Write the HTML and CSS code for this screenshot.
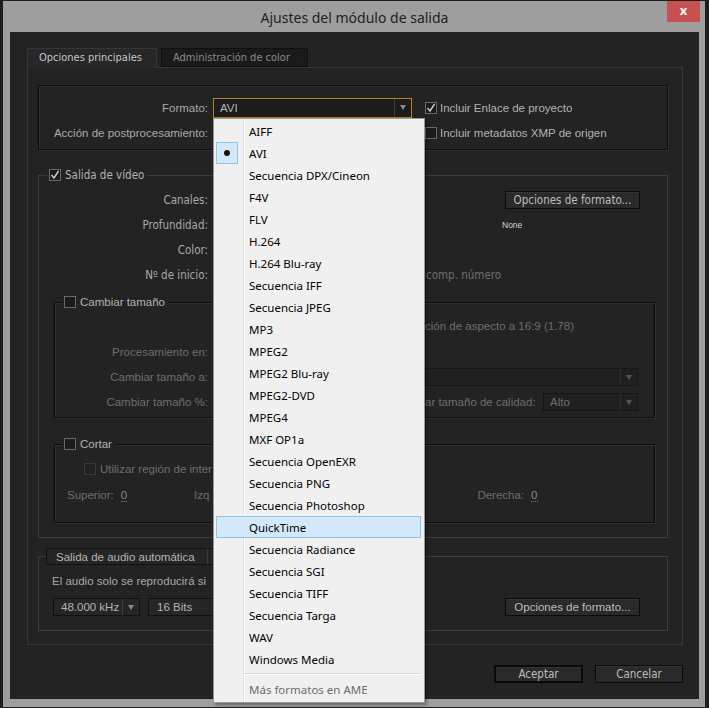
FILE: index.html
```html
<!DOCTYPE html>
<html lang="es">
<head>
    <meta charset="UTF-8">
    <title>Ajustes del módulo de salida</title>
    <link rel="stylesheet" href="styles.css">
</head>
<body>

<div class="window">
    <div class="titlebar">
        <span class="title">Ajustes del módulo de salida</span>
        <span class="close">x</span>
    </div>

    <div class="dialog">
        <div class="tabs">
            <div class="tab active">Opciones principales</div>
            <div class="tab">Administración de color</div>
        </div>

        <div class="panel">
            <!-- formato -->
            <div class="group group-format">
                <div class="row">
                    <span class="label">Formato:</span>
                    <div class="select select-format focus"><span class="value">AVI</span><span class="arrow"></span></div>
                    <span class="check on"><span class="box"><svg viewBox="0 0 10 10"><polyline points="1.5,5 4,8 8.5,1"/></svg></span>Incluir Enlace de proyecto</span>
                </div>
                <div class="row">
                    <span class="label">Acción de postprocesamiento:</span>
                    <div class="select select-format"><span class="value"></span><span class="arrow"></span></div>
                    <span class="check"><span class="box"></span>Incluir metadatos XMP de origen</span>
                </div>
            </div>

            <!-- video -->
            <div class="group group-video">
                <div class="legend"><span class="check on"><span class="box"><svg viewBox="0 0 10 10"><polyline points="1.5,5 4,8 8.5,1"/></svg></span><span class="wide">Salida de vídeo</span></span></div>
                <div class="vrow">
                    <span class="label wide">Canales:</span>
                    <button class="btn btn-format wide">Opciones de formato...</button>
                </div>
                <div class="vrow">
                    <span class="label wide">Profundidad:</span>
                    <span class="none">None</span>
                </div>
                <div class="vrow">
                    <span class="label wide">Color:</span>
                </div>
                <div class="vrow">
                    <span class="label wide">Nº de inicio:</span>
                    <span class="dim wide comp">comp. número</span>
                </div>

                <div class="group group-sub group-resize">
                    <div class="legend"><span class="check"><span class="box"></span>Cambiar tamaño</span></div>
                    <div class="srow">
                        <span class="label"></span>
                        <span class="dim at-right">ción de aspecto a 16:9 (1.78)</span>
                    </div>
                    <div class="srow">
                        <span class="label dim">Procesamiento en:</span>
                    </div>
                    <div class="srow">
                        <span class="label dim">Cambiar tamaño a:</span>
                        <div class="select select-off select-size"><span class="value"></span><span class="arrow"></span></div>
                    </div>
                    <div class="srow">
                        <span class="label dim">Cambiar tamaño %:</span>
                        <span class="dim at-right">ar tamaño de calidad:</span>
                        <div class="select select-off select-quality"><span class="value">Alto</span><span class="arrow"></span></div>
                    </div>
                </div>

                <div class="group group-sub group-crop">
                    <div class="legend"><span class="check"><span class="box"></span>Cortar</span></div>
                    <div class="srow">
                        <span class="check off roi"><span class="box"></span>Utilizar región de inter</span>
                    </div>
                    <div class="srow crop-values">
                        <span class="dim sup">Superior:</span><span class="num">0</span>
                        <span class="dim izq">Izq</span>
                        <span class="dim der">Derecha:</span><span class="num">0</span>
                    </div>
                </div>
            </div>

            <!-- audio -->
            <div class="group group-audio">
                <div class="legend legend-select">
                    <div class="select select-audio"><span class="value">Salida de audio automática</span><span class="arrow"></span></div>
                </div>
                <div class="arow">El audio solo se reproducirá si</div>
                <div class="arow arow-controls">
                    <div class="select select-rate"><span class="value">48.000 kHz</span><span class="arrow"></span></div>
                    <div class="select select-bits"><span class="value">16 Bits</span><span class="arrow"></span></div>
                    <button class="btn btn-format">Opciones de formato...</button>
                </div>
            </div>
        </div>

        <div class="buttons">
            <button class="btn btn-main default">Aceptar</button>
            <button class="btn btn-main">Cancelar</button>
        </div>
    </div>

    <!-- lista desplegable de formatos -->
    <div class="menu">
        <div class="menu-item">AIFF</div>
        <div class="menu-item checked"><span class="bullet"></span>AVI</div>
        <div class="menu-item">Secuencia DPX/Cineon</div>
        <div class="menu-item">F4V</div>
        <div class="menu-item">FLV</div>
        <div class="menu-item">H.264</div>
        <div class="menu-item">H.264 Blu-ray</div>
        <div class="menu-item">Secuencia IFF</div>
        <div class="menu-item">Secuencia JPEG</div>
        <div class="menu-item">MP3</div>
        <div class="menu-item">MPEG2</div>
        <div class="menu-item">MPEG2 Blu-ray</div>
        <div class="menu-item">MPEG2-DVD</div>
        <div class="menu-item">MPEG4</div>
        <div class="menu-item">MXF OP1a</div>
        <div class="menu-item">Secuencia OpenEXR</div>
        <div class="menu-item">Secuencia PNG</div>
        <div class="menu-item">Secuencia Photoshop</div>
        <div class="menu-item hover">QuickTime</div>
        <div class="menu-item">Secuencia Radiance</div>
        <div class="menu-item">Secuencia SGI</div>
        <div class="menu-item">Secuencia TIFF</div>
        <div class="menu-item">Secuencia Targa</div>
        <div class="menu-item">WAV</div>
        <div class="menu-item">Windows Media</div>
        <div class="menu-sep"></div>
        <div class="menu-item disabled">Más formatos en AME</div>
    </div>
</div>

</body>
</html>
```

FILE: styles.css
```css
* { box-sizing: border-box; }
body {
    margin: 0;
    background: #1d1d1d;
    font-family: "Liberation Sans", Arial, sans-serif;
    font-size: 11.5px;
    color: #a9a9a9;
}
button { font: inherit; }

.window {
    position: relative;
    margin: 1px 4px 0 3px;
    height: 706px;
    background: #9e9e9e;
    padding: 0 6px 7px 7px;
}
.titlebar {
    height: 31px;
    display: grid;
    grid-template-columns: 1fr auto 1fr;
}
.title {
    grid-column: 2;
    align-self: center;
    padding-top: 1px;
    font-family: "Noto Sans", sans-serif;
    font-size: 14px;
    color: #1e1e1e;
}
.close {
    grid-column: 3;
    justify-self: end;
    width: 33px;
    height: 21px;
    margin-right: -1px;
    background: #c75050;
    color: #fff;
    font-family: "Noto Sans", sans-serif;
    font-size: 13px;
    font-weight: bold;
    text-align: center;
    line-height: 19px;
}

.dialog {
    height: 667px;
    background: #232323;
    padding: 16px 16px 16px 17px;
}

/* tabs */
.tabs {
    display: flex;
    align-items: flex-start;
    height: 19px;
}
.tab {
    height: 19px;
    padding: 0 11px;
    line-height: 18px;
    white-space: nowrap;
    font-family: "DejaVu Sans Condensed", "DejaVu Sans", sans-serif;
    font-size: 11px;
    color: #8a8a8a;
    background: #1a1a1a;
    border: 1px solid #101010;
    margin-left: 4px;
    width: 147px;
}
.tab.active {
    position: relative;
    z-index: 1;
    height: 20px;
    width: 130px;
    margin-left: 0;
    color: #c4c4c4;
    background: #272727;
    border: 1px solid #363636;
    border-bottom: none;
}

.panel {
    height: 578px;
    border: 1px solid #363636;
    padding: 17px 14px 0 10px;
}

/* grupos */
.group {
    border: 1px solid #0e0e0e;
    box-shadow: inset 1px 1px 0 #303030, 1px 1px 0 #303030;
}
.group-format {
    height: 65px;
    padding: 12px 0 0;
    display: flex;
    flex-direction: column;
    gap: 5px;
}
.row {
    display: flex;
    align-items: center;
    height: 20px;
}
.label {
    flex-shrink: 0;
    width: 169px;
    text-align: right;
    white-space: nowrap;
}
.wide {
    font-family: "DejaVu Sans Condensed", "DejaVu Sans", sans-serif;
    font-size: 11.5px;
}

.select {
    display: flex;
    align-items: center;
    height: 18px;
    background: #1e1e1e;
    border: 1px solid #0d0d0d;
    color: #b4b4b4;
    white-space: nowrap;
}
.select .value {
    flex: 1;
    padding-left: 6px;
    overflow: hidden;
}
.select .arrow {
    width: 17px;
    height: 100%;
    border-left: 1px solid #3c3c3c;
    position: relative;
}
.select .arrow::after {
    content: '';
    position: absolute;
    left: 5px;
    top: 6px;
    border-left: 3.5px solid transparent;
    border-right: 3.5px solid transparent;
    border-top: 5px solid #8a8a8a;
}
.select-format {
    margin-left: 5px;
    width: 199px;
    height: 20px;
    background: #1c1c1c;
}
.select-format.focus { border-color: #b47f2c; }

.check {
    display: flex;
    align-items: center;
    gap: 3px;
    white-space: nowrap;
    color: #b2b2b2;
}
.row .check { margin-left: 13px; }
.box {
    width: 12px;
    height: 12px;
    flex-shrink: 0;
    border: 1px solid #6a6a6a;
    background: #1b1b1b;
    display: flex;
}
.box svg {
    width: 10px;
    height: 10px;
    fill: none;
    stroke: #cfcfcf;
    stroke-width: 1.4;
}

/* leyenda de grupo */
.legend {
    width: fit-content;
    height: 14px;
    margin: -8px 0 0 8px;
    padding: 0 3px 0 2px;
    background: #232323;
    display: flex;
    align-items: center;
}
.legend .check { gap: 4px; }

.group-video {
    margin-top: 25px;
    height: 363px;
    border-color: #3d3d3d;
    box-shadow: none;
}
.vrow {
    display: flex;
    align-items: center;
    height: 18px;
    margin-top: 7px;
}
.group-video .legend + .vrow { margin-top: 9px; }
.btn {
    height: 18px;
    padding: 0;
    background: #2a2a2a;
    border: 1px solid #0b0b0b;
    box-shadow: inset 0 1px 0 #353535;
    color: #bdbdbd;
    cursor: default;
}
.btn-format {
    width: 135px;
    margin-left: auto;
    margin-right: 27px;
}
.none {
    margin-left: 294px;
    font-size: 8.5px;
    color: #d4d4d4;
}
.dim { color: #6e6e6e; white-space: nowrap; }
.comp { margin-left: 218px; }

.group-sub {
    margin: 18px 12px 0 15px;
}
.group-sub .legend { margin-left: 7px; }
.group-resize { height: 116px; }
.srow {
    display: flex;
    align-items: center;
    height: 18px;
    margin-top: 7px;
}
.group-sub .label { width: 153px; }
.group-resize .legend + .srow { margin-top: 8px; }
.group-resize .srow:nth-child(3) { margin-top: 8px; }
.at-right { margin-left: 217px; }
.select-off {
    background: #202020;
    border-color: #161616;
    color: #6e6e6e;
}
.select-off .arrow { border-left-color: #2e2e2e; }
.select-off .arrow::after { border-top-color: #555; }
.select-size { width: 213px; margin-left: auto; margin-right: 16px; }
.select-quality { width: 95px; margin-left: auto; margin-right: 16px; }

.group-crop {
    margin-top: 26px;
    height: 79px;
}
.group-crop .legend + .srow { margin-top: 9px; }
.roi { margin-left: 29px; color: #6e6e6e; gap: 4px; }
.roi .box { border-color: #3a3a3a; background: #222; }
.crop-values { margin-top: 8px; }
.sup { margin-left: 12px; }
.num {
    margin-left: 7px;
    color: #8a8a8a;
    border-bottom: 1px dotted #777;
    line-height: 12px;
}
.izq { margin-left: 67px; }
.der { margin-left: 268px; }

/* audio */
.group-audio {
    margin-top: 18px;
    height: 75px;
    border-color: #3d3d3d;
    box-shadow: none;
}
.legend-select {
    height: 17px;
    margin: -9px 0 0 7px;
    padding: 0;
}
.select-audio {
    width: 179px;
    height: 17px;
    background: #262626;
    border-color: #111;
}
.select-audio .value { flex: 0 0 160px; padding-left: 9px; }
.arow {
    height: 18px;
    margin-top: 7px;
    padding-left: 13px;
    display: flex;
    align-items: center;
    white-space: nowrap;
}
.arow-controls { margin-top: 8px; padding-left: 14px; }
.select-rate, .select-bits {
    height: 18px;
    background: #262626;
    border-color: #111;
}
.select-rate { width: 87px; }
.select-rate .value { padding-left: 7px; }
.select-bits { width: 87px; margin-left: 8px; }
.select-bits .value { padding-left: 8px; }

/* botones inferiores */
.buttons {
    display: flex;
    justify-content: flex-end;
    gap: 12px;
    margin-top: 20px;
}
.btn-main {
    width: 88px;
    font-family: "DejaVu Sans Condensed", "DejaVu Sans", sans-serif;
    font-size: 11.5px;
}
.btn-main.default {
    width: 89px;
    border: 2px solid #0a0a0a;
}

/* menu */
.menu {
    position: absolute;
    left: 210px;
    top: 117px;
    width: 212px;
    height: 585px;
    background: #f0f0f0;
    border: 1px solid #979797;
    padding: 1px 3px 2px 2px;
    box-shadow: 2px 2px 3px rgba(0,0,0,0.35);
    font-family: "Noto Sans", sans-serif;
    font-size: 11.5px;
    color: #000;
    z-index: 5;
}
.menu::before {
    content: '';
    position: absolute;
    left: 29px;
    top: 0;
    bottom: 0;
    width: 1px;
    background: #e2e3e3;
    box-shadow: 1px 0 0 #fff;
}
.menu-item {
    position: relative;
    height: 22px;
    padding-left: 32px;
    display: flex;
    align-items: center;
    border: 1px solid transparent;
    white-space: nowrap;
}
.menu-item.hover {
    background: #d3e8f8;
    border-color: #8ec3ea;
}
.menu-item.disabled { color: #6d6d6d; }
.bullet {
    position: absolute;
    left: -1px;
    top: -1px;
    width: 22px;
    height: 22px;
    background: #d3e8f8;
    border: 1px solid #8ec3ea;
}
.bullet::after {
    content: '';
    position: absolute;
    left: 7px;
    top: 7px;
    width: 6px;
    height: 6px;
    border-radius: 50%;
    background: #111;
}
.menu-sep {
    position: relative;
    height: 8px;
    margin-left: 28px;
}
.menu-sep::after {
    content: '';
    position: absolute;
    left: 0;
    right: 0;
    top: 3px;
    height: 1px;
    background: #d7d7d7;
    box-shadow: 0 1px 0 #fff;
}
```
